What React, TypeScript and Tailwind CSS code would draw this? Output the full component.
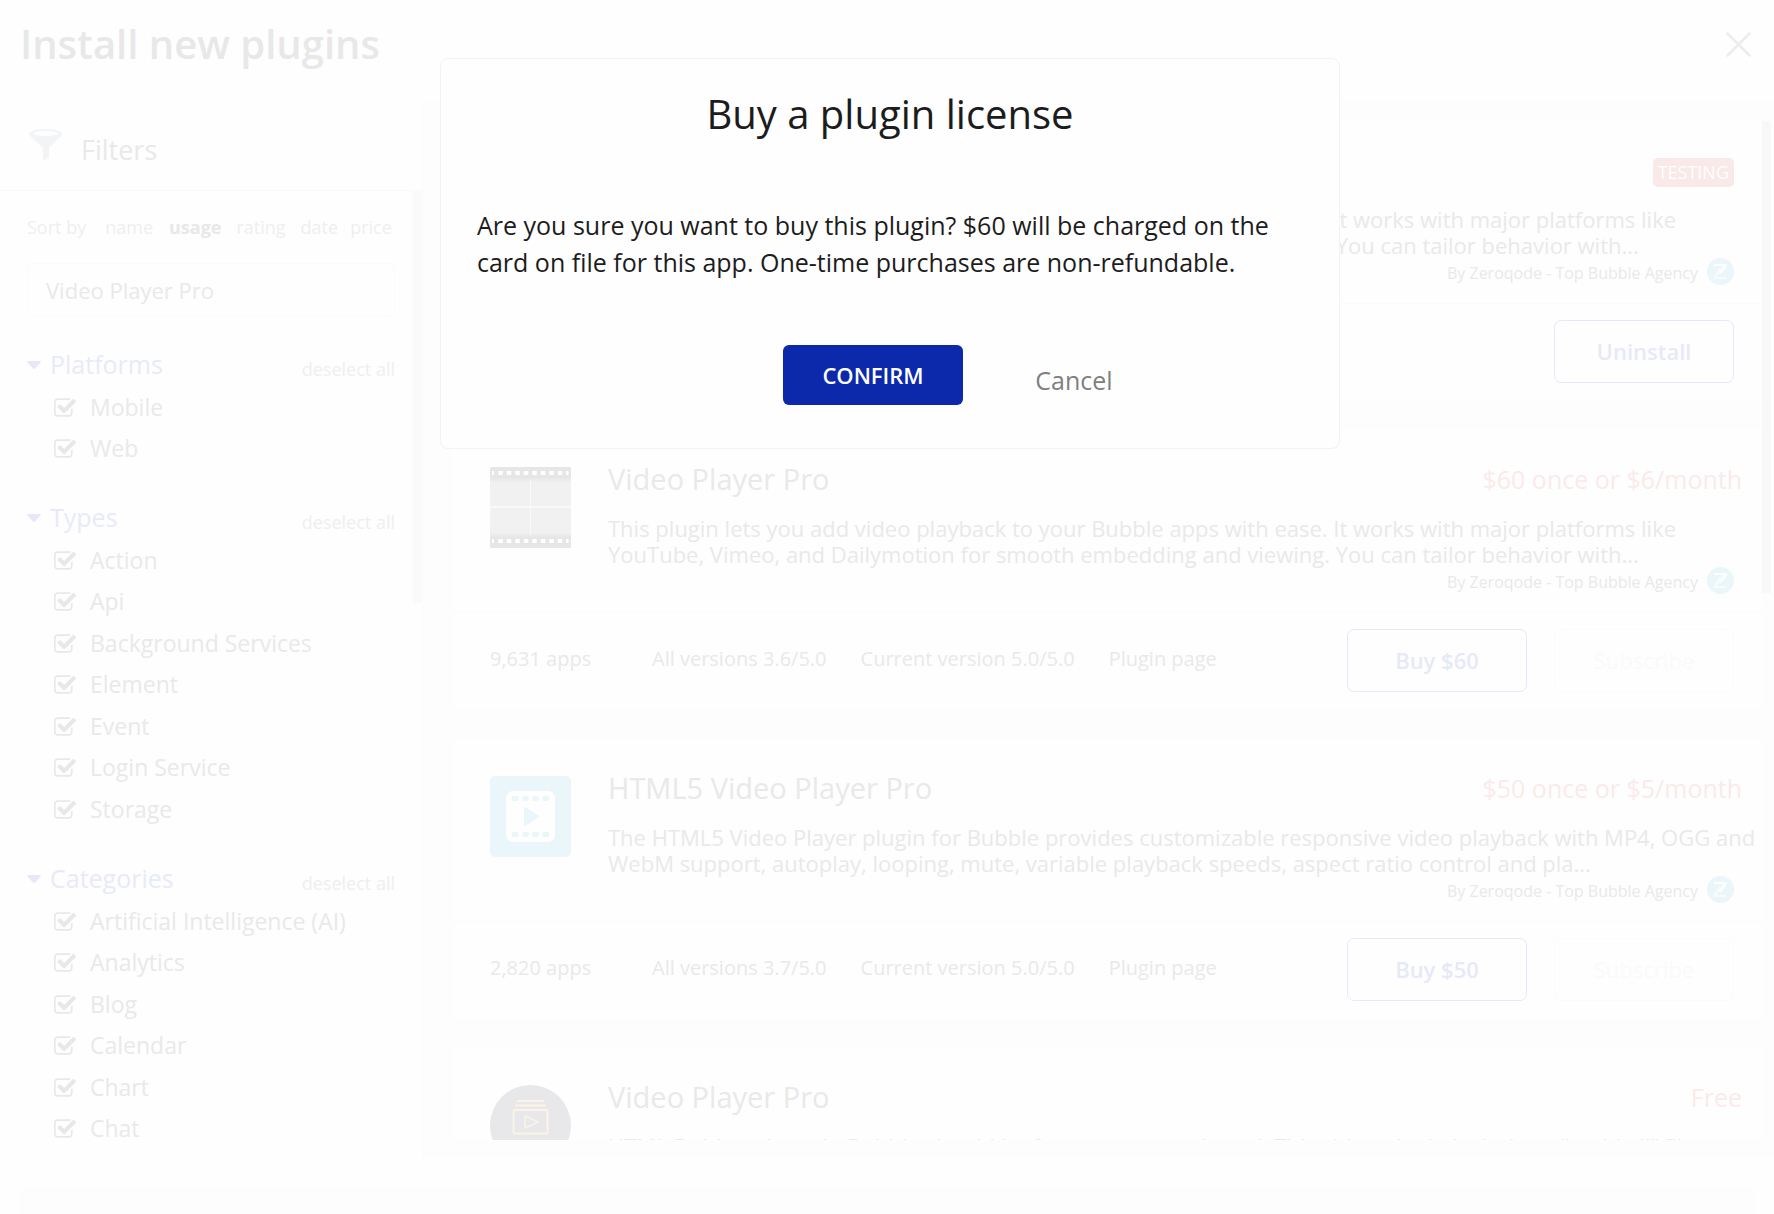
import React from "react";

function CheckIcon() {
  return (
    <svg viewBox="0 0 1664 1408" className="h-[19px] w-[22px] shrink-0" fill="#e8e8e8" aria-hidden="true">
      <path d="M1408 802v318q0 119-84.5 203.5t-203.5 84.5h-832q-119 0-203.5-84.5t-84.5-203.5v-832q0-119 84.5-203.5t203.5-84.5h832q63 0 117 25 15 7 18 23 3 17-9 29l-49 49q-10 10-23 10-3 0-9-2-23-6-45-6h-832q-66 0-113 47t-47 113v832q0 66 47 113t113 47h832q66 0 113-47t47-113v-254q0-13 9-22l64-64q10-10 23-10 6 0 12 3 20 8 20 29zm231-489l-814 814q-24 24-57 24t-57-24l-430-430q-24-24-24-57t24-57l110-110q24-24 57-24t57 24l263 263 647-647q24-24 57-24t57 24l110 110q24 24 24 57t-24 57z" />
    </svg>
  );
}

function FunnelIcon() {
  return (
    <svg viewBox="0 0 33 32" className="h-8 w-[33px] shrink-0" aria-hidden="true">
      <path d="M0 5C0 2 7 0 16.500 0S33 2 33 5c0 1-1 2-2 3L20 19v10l-6 3V19L2 8C1 7 0 6 0 5Z" fill="#f2f4f6" />
      <ellipse cx="16.500" cy="4.500" rx="12.500" ry="2.600" fill="#fefefe" />
    </svg>
  );
}

function Avatar() {
  return (
    <svg viewBox="0 0 27 27" className="size-[27px] shrink-0" aria-hidden="true">
      <circle cx="13.500" cy="13.500" r="13.500" fill="#eaf6f9" />
      <path d="M7 6h13l-1 4-5 6h-3l5-8H7Z" fill="#fdfefe" />
      <path d="M12 10h3l-5 9h9v2H6l1-3Z" fill="#f6fbfc" />
    </svg>
  );
}

const holes = [5.9, 14.4, 22.9, 31.400, 39.900, 48.400, 56.900, 65.400];

function FilmIcon() {
  return (
    <svg viewBox="0 0 81 81" className="size-[81px]" aria-hidden="true">
      <defs>
        <linearGradient id="film" x1="0" y1="0" x2="0" y2="1">
          <stop offset="0" stopColor="#e6e6e6" />
          <stop offset="0.130" stopColor="#e6e6e6" />
          <stop offset="0.190" stopColor="#f1f1f1" />
          <stop offset="0.810" stopColor="#f1f1f1" />
          <stop offset="0.870" stopColor="#e6e6e6" />
          <stop offset="1" stopColor="#e6e6e6" />
        </linearGradient>
      </defs>
      <rect width="81" height="81" rx="1.500" fill="url(#film)" />
      <rect y="39" width="81" height="2" fill="#f9f9f9" />
      <rect x="40" y="13" width="1" height="55" fill="#f9f9f9" />
      {[4, 72].map((y) => (
        <g key={y} fill="#fefefe">
          <rect x="2" y={y} width="2" height="4" />
          {holes.map((x) => (
            <rect key={x} x={x + 2.400} y={y} width="4.500" height="4" />
          ))}
          <rect x="76" y={y} width="2.500" height="4" />
        </g>
      ))}
    </svg>
  );
}

function PlayerIcon() {
  return (
    <svg viewBox="0 0 81 81" className="size-[81px]" aria-hidden="true">
      <rect width="81" height="81" rx="5" fill="#eaf6f9" />
      <rect x="16" y="15" width="49" height="51" rx="7" fill="#fefefe" />
      {[20, 56].map((y) => (
        <g key={y} fill="#eaf6f9">
          {[21.500, 32, 42, 52.300].map((x) => (
            <rect key={x} x={x} y={y} width="7" height="5" rx="2.300" />
          ))}
        </g>
      ))}
      <path d="M35 32v17l13-8.500Z" fill="#eaf6f9" stroke="#eaf6f9" strokeWidth="2" strokeLinejoin="round" />
    </svg>
  );
}

function StackIcon() {
  return (
    <svg viewBox="0 0 81 81" className="size-[81px]" aria-hidden="true">
      <circle cx="40.500" cy="40.500" r="40.500" fill="#e8e8ea" />
      <g fill="none" stroke="#faf3e6" strokeWidth="2">
        <path d="M27 16h27M25 20.500h31" />
        <rect x="23.500" y="25" width="34" height="23.500" rx="1" />
        <path d="M35 31v12l13-6Z" strokeWidth="1.500" strokeLinejoin="round" />
      </g>
      <text x="40" y="61" textAnchor="middle" fontSize="9" fontWeight="700" fontFamily="Open Sans, sans-serif" fill="#fafafa">
        Pro
      </text>
    </svg>
  );
}

type Plugin = {
  id: string;
  title: string;
  lines: string[];
  price?: string;
  apps: string;
  all: string;
  current: string;
  buy?: string;
  icon: () => React.JSX.Element;
};

const proLines = [
  "This plugin lets you add video playback to your Bubble apps with ease. It works with major platforms like",
  "YouTube, Vimeo, and Dailymotion for smooth embedding and viewing. You can tailor behavior with...",
];

const plugins: Plugin[] = [
  { id: "installed", title: "Video Player Pro", lines: proLines, apps: "9,631 apps", all: "3.6/5.0", current: "5.0/5.0", icon: FilmIcon },
  { id: "pro", title: "Video Player Pro", lines: proLines, price: "$60 once or $6/month", apps: "9,631 apps", all: "3.6/5.0", current: "5.0/5.0", buy: "Buy $60", icon: FilmIcon },
  {
    id: "html5",
    title: "HTML5 Video Player Pro",
    lines: [
      "The HTML5 Video Player plugin for Bubble provides customizable responsive video playback with MP4, OGG and",
      "WebM support, autoplay, looping, mute, variable playback speeds, aspect ratio control and pla...",
    ],
    price: "$50 once or $5/month",
    apps: "2,820 apps",
    all: "3.7/5.0",
    current: "5.0/5.0",
    buy: "Buy $50",
    icon: PlayerIcon,
  },
  {
    id: "free",
    title: "Video Player Pro",
    lines: ["HTML 5 video player in Bubble should be for everyone and used. This video plugin includes a “multi all” file", ""],
    price: "Free",
    apps: "1,204 apps",
    all: "4.0/5.0",
    current: "5.0/5.0",
    buy: "Install",
    icon: StackIcon,
  },
];

const buttonBase = "h-[63px] w-[180px] rounded-[7px] border text-[22px]";

function PluginCard({ plugin }: { plugin: Plugin }) {
  const Icon = plugin.icon;
  return (
    <article className="shrink-0 bg-[#fefefe] pt-[29px] text-[#e9e9e9]">
      <div className="flex pr-7 pl-[37px]">
        <div className="mt-2 w-[118px] shrink-0">
          <Icon />
        </div>
        <div className="min-w-0 flex-1">
          <div className="flex items-start justify-between">
            <h2 className="text-[29px] leading-10">{plugin.title}</h2>
            {plugin.price ? (
              <span className="-mr-2 text-[25px] leading-10 text-[#fbeaea]">{plugin.price}</span>
            ) : (
              <span className="mt-2 rounded-[5px] bg-[#fae9e9] px-[5px] text-lg leading-[29px] text-[#fefefe]">TESTING</span>
            )}
          </div>
          <p className="mt-4 h-[52px] text-[22px] leading-[26px] whitespace-nowrap">
            {plugin.lines[0]}
            <br />
            {plugin.lines[1]}
          </p>
          <div className="flex h-[27px] items-center justify-end gap-[9px] text-base">
            <span className="pt-0.5">By Zeroqode - Top Bubble Agency</span>
            <Avatar />
          </div>
        </div>
      </div>
      <div className="mt-[18px] flex items-start border-t border-dotted border-[#f8f8f8] pt-4 pr-7 pb-[18px] pl-[37px]">
        <div className="flex flex-1 text-xl leading-[60px]">
          <span className="w-[162px]">{plugin.apps}</span>
          <span className="mr-[34px]">All versions {plugin.all}</span>
          <span className="mr-[34px]">Current version {plugin.current}</span>
          <a href="#plugin">Plugin page</a>
        </div>
        {plugin.buy ? (
          <div className="flex gap-[27px]">
            <button className={buttonBase + " border-[#e7e8f9] font-semibold text-[#e7e9f8]"}>{plugin.buy}</button>
            <button className={buttonBase + " border-[#fbfbfb] text-[#fafafc]"}>Subscribe</button>
          </div>
        ) : (
          <button className={buttonBase + " border-[#e7e8f9] font-semibold text-[#e7e9f8]"}>Uninstall</button>
        )}
      </div>
    </article>
  );
}

const groups = [
  { name: "Platforms", items: ["Mobile", "Web"] },
  { name: "Types", items: ["Action", "Api", "Background Services", "Element", "Event", "Login Service", "Storage"] },
  { name: "Categories", items: ["Artificial Intelligence (AI)", "Analytics", "Blog", "Calendar", "Chart", "Chat"] },
];

function Sidebar() {
  return (
    <aside className="flex w-[423px] shrink-0 flex-col border-r border-[#fbfbfb] text-[#e9e9e9]">
      <div className="flex h-[90px] shrink-0 items-start border-b border-[#fafafa] pt-7 pl-[29px]">
        <FunnelIcon />
        <h2 className="ml-[19px] text-[27px] leading-[42px]">Filters</h2>
      </div>
      <div className="relative min-h-0 flex-1 overflow-hidden pr-[27px] pl-[27px]">
        <div className="absolute top-0 right-0 h-[412px] w-[9px] bg-[#fafafa]" />
        <div className="flex h-[72px] items-center text-lg text-[#efefef]">
          <span className="mr-[19px]">Sort by</span>
          <button className="mr-4">name</button>
          <button className="mr-[15px] font-bold text-[#e8e8e8]">usage</button>
          <button className="mr-[15px]">rating</button>
          <button className="mr-3">date</button>
          <button>price</button>
        </div>
        <input
          aria-label="Search plugins"
          defaultValue="Video Player Pro"
          className="mb-[27px] block h-[54px] w-full rounded-md border border-[#fbfbfb] bg-transparent px-[18px] text-[22px] outline-none"
        />
        {groups.map((group) => (
          <section key={group.name} className="mb-7">
            <div className="flex h-[42px] items-end justify-between">
              <h3 className="flex h-full items-center gap-[9px] text-[25px] text-[#e8eafa]">
                <svg viewBox="0 0 14 8" className="h-2 w-3.5" fill="#e6e8fa" aria-hidden="true">
                  <path d="M1 0h12q1.500.3.500 1.500L8 7.500q-1 .8-2 0L.5 1.500Q-.5.300 1 0Z" />
                </svg>
                {group.name}
              </h3>
              <button className="text-lg leading-[34px] text-[#efefef]">deselect all</button>
            </div>
            <ul>
              {group.items.map((item) => (
                <li key={item} className="h-[42px] even:h-[41px]">
                  <label className="flex h-full items-center gap-3.5 pl-[27px] text-[23px]">
                    <input type="checkbox" defaultChecked className="sr-only" />
                    <CheckIcon />
                    {item}
                  </label>
                </li>
              ))}
            </ul>
          </section>
        ))}
      </div>
    </aside>
  );
}

function BuyDialog() {
  return (
    <div className="absolute inset-x-0 top-[58px] flex justify-center pl-1.5">
      <div
        role="dialog"
        aria-labelledby="dialog-title"
        className="w-full max-w-[900px] rounded-lg border border-[#f3f3f3] bg-[#fefefe] px-[36px] pt-[35px] pb-[43px] text-[#1c1c1c]"
      >
        <h2 id="dialog-title" className="text-center text-[40px] leading-10">
          Buy a plugin license
        </h2>
        <p className="mt-[73px] text-[25px] leading-[37px]">
          Are you sure you want to buy this plugin? $60 will be charged on the
          <br />
          card on file for this app. One-time purchases are non-refundable.
        </p>
        <div className="mt-16 flex items-end justify-end gap-[21px] pr-[139px]">
          <button className="h-[60px] w-[180px] rounded-md bg-[#0c29ab] text-[22px] font-semibold text-white">CONFIRM</button>
          <button className="h-12 w-[180px] text-[25px] text-[#808080]">Cancel</button>
        </div>
      </div>
    </div>
  );
}

export default function App() {
  return (
    <div className="relative flex h-screen flex-col overflow-hidden bg-[#fefefe] font-['Open_Sans',sans-serif]">
      <header className="flex h-[101px] shrink-0 items-start justify-between pt-6 pr-[23px] pl-5">
        <h1 className="text-[40px] leading-10 font-semibold text-[#e8e8e8]">Install new plugins</h1>
        <button aria-label="Close" className="mt-2">
          <svg viewBox="0 0 25 25" className="size-[25px]" fill="none" stroke="#ededed" strokeWidth="2.500" strokeLinecap="round">
            <path d="M1.500 1.500l22 22M23.500 1.500l-22 22" />
          </svg>
        </button>
      </header>
      <div className="flex min-h-0 flex-1">
        <Sidebar />
        <main className="relative flex min-w-0 flex-1 flex-col bg-[#fdfdfd] pt-5 pr-3 pb-[18px] pl-[30px]">
          <div className="flex min-h-0 flex-1 flex-col gap-[29px] overflow-hidden">
            {plugins.map((plugin) => (
              <PluginCard key={plugin.id} plugin={plugin} />
            ))}
          </div>
          <div className="absolute top-5 right-[3px] h-[472px] w-[9px] bg-[#f8f8f8]" />
        </main>
      </div>
      <footer className="flex h-14 shrink-0 px-5 pt-[30px]">
        <div className="flex-1 bg-[#fdfdfd]" />
      </footer>
      <BuyDialog />
    </div>
  );
}
